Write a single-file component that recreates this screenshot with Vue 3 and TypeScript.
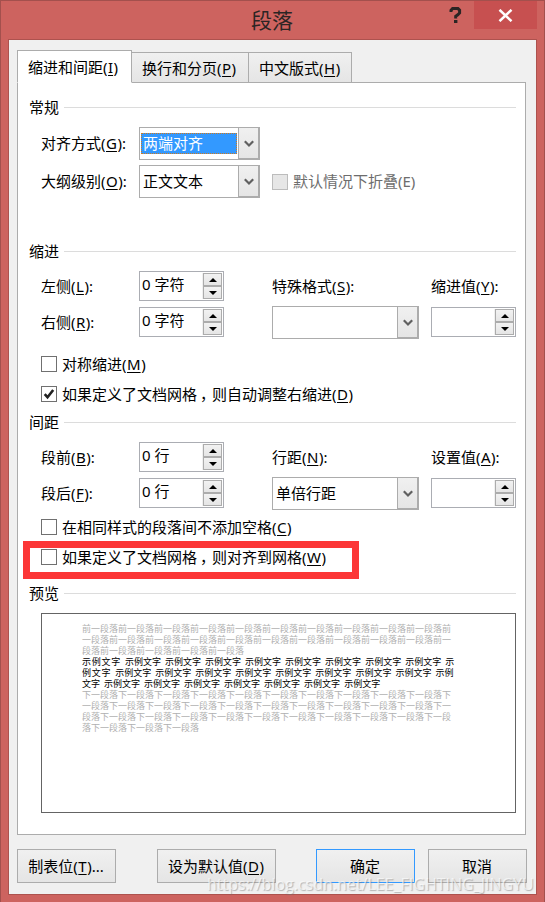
<script setup lang="ts">
import { h, ref, type FunctionalComponent } from 'vue'

// Renders a caption in which "&X" marks the underlined access key.
const Caption: FunctionalComponent<{ text: string }> = (props) =>
  h(
    'span',
    { class: 'caption' },
    props.text
      .split(/(&.|，)/)
      .filter(Boolean)
      .map((part) =>
        part[0] === '&' ? h('u', part[1]) : part === '，' ? h('span', { class: 'comma' }, part) : part,
      ),
  )
Caption.props = ['text']

const tabs = ['缩进和间距(&I)', '换行和分页(&P)', '中文版式(&H)']
const activeTab = ref(0)

const mirror = ref(false)
const autoIndent = ref(true)
const noSpace = ref(false)
const snapGrid = ref(false)

const prevText = '前一段落'.repeat(25)
const nextText = '下一段落'.repeat(34)
const slice = (s: string, n: number): string[] => s.match(new RegExp(`.{1,${n}}`, 'g')) ?? []
const prevLines = slice(prevText, 41)
const nextLines = slice(nextText, 41)
const sample = '示例文字'
const sampleLines = [
  { head: sample, rest: ` ${(sample + ' ').repeat(8)}示`, wide: true },
  { head: '例文字', rest: ` ${(sample + ' ').repeat(8)}示例`, wide: true },
  { head: '文字', rest: ` ${(sample + ' ').repeat(7)}`, wide: false },
]
</script>

<template>
  <div class="window" lang="zh-CN">
    <header class="titlebar">
      <h1 class="title">段落</h1>
      <svg class="help" width="13" height="17" viewBox="0 0 13 17">
        <path d="M2 5V3.4L3.6 1.6H9L10.6 3.2V6L8.8 7.8L6.7 9.2V11.6" fill="none" stroke="#2b2524" stroke-width="3" />
        <rect x="5" y="13" width="3.4" height="3" fill="#2b2524" />
      </svg>
      <button class="close">
        <svg width="15" height="13" viewBox="0 0 15 13">
          <path d="M1.5 .8L13.5 12.2M13.5 .8L1.5 12.2" fill="none" stroke="#fff" stroke-width="2.5" />
        </svg>
      </button>
    </header>

    <main class="client">
      <nav class="tabs">
        <div v-for="(t, i) in tabs" :key="t" class="tab" :class="{ active: i === activeTab }" @click="activeTab = i">
          <Caption :text="t" />
        </div>
      </nav>

      <section class="panel">
        <div class="group g1"><span>常规</span></div>
        <div class="row first">
          <Caption class="label" text="对齐方式(&G):" />
          <div class="combo narrow">
            <span class="value selected">两端对齐</span>
            <span class="drop"><svg width="10" height="8" viewBox="0 0 10 8"><path d="M.8 1.2L5 5.5L9.2 1.2" /></svg></span>
          </div>
        </div>
        <div class="row second">
          <Caption class="label" text="大纲级别(&O):" />
          <div class="combo narrow">
            <span class="value">正文文本</span>
            <span class="drop"><svg width="10" height="8" viewBox="0 0 10 8"><path d="M.8 1.2L5 5.5L9.2 1.2" /></svg></span>
          </div>
          <div class="check disabled"><i class="box"></i><Caption class="label" text="默认情况下折叠(E)" /></div>
        </div>

        <div class="group g2"><span>缩进</span></div>
        <div class="row first spins">
          <Caption text="左侧(&L):" />
          <div class="spin"><span class="num">0 字符</span><span class="arrows"><i></i><i></i></span></div>
          <Caption text="特殊格式(&S):" />
          <Caption text="缩进值(&Y):" />
        </div>
        <div class="row second">
          <Caption class="label" text="右侧(&R):" />
          <div class="spin"><span class="num">0 字符</span><span class="arrows"><i></i><i></i></span></div>
          <div class="combo">
            <span class="value"></span>
            <span class="drop"><svg width="10" height="8" viewBox="0 0 10 8"><path d="M.8 1.2L5 5.5L9.2 1.2" /></svg></span>
          </div>
          <div class="spin"><span class="num"></span><span class="arrows"><i></i><i></i></span></div>
        </div>
        <div class="check c1" @click="mirror = !mirror">
          <i class="box"><svg v-if="mirror" viewBox="0 0 14 14"><path d="M2.7 7.2L5.5 10.2L11.2 3" /></svg></i>
          <Caption text="对称缩进(&M)" />
        </div>
        <div class="check c2" @click="autoIndent = !autoIndent">
          <i class="box"><svg v-if="autoIndent" viewBox="0 0 14 14"><path d="M2.7 7.2L5.5 10.2L11.2 3" /></svg></i>
          <Caption text="如果定义了文档网格，则自动调整右缩进(&D)" />
        </div>

        <div class="group g3"><span>间距</span></div>
        <div class="row first spins">
          <Caption text="段前(&B):" />
          <div class="spin"><span class="num">0 行</span><span class="arrows"><i></i><i></i></span></div>
          <Caption text="行距(&N):" />
          <Caption text="设置值(&A):" />
        </div>
        <div class="row second">
          <Caption class="label" text="段后(&F):" />
          <div class="spin"><span class="num">0 行</span><span class="arrows"><i></i><i></i></span></div>
          <div class="combo">
            <span class="value">单倍行距</span>
            <span class="drop"><svg width="10" height="8" viewBox="0 0 10 8"><path d="M.8 1.2L5 5.5L9.2 1.2" /></svg></span>
          </div>
          <div class="spin"><span class="num"></span><span class="arrows"><i></i><i></i></span></div>
        </div>
        <div class="check c3" @click="noSpace = !noSpace">
          <i class="box"><svg v-if="noSpace" viewBox="0 0 14 14"><path d="M2.7 7.2L5.5 10.2L11.2 3" /></svg></i>
          <Caption text="在相同样式的段落间不添加空格(&C)" />
        </div>
        <div class="check c2 marked" @click="snapGrid = !snapGrid">
          <i class="box"><svg v-if="snapGrid" viewBox="0 0 14 14"><path d="M2.7 7.2L5.5 10.2L11.2 3" /></svg></i>
          <Caption text="如果定义了文档网格，则对齐到网格(&W)" />
        </div>

        <div class="group g4"><span>预览</span></div>
        <div class="preview">
          <p v-for="(l, i) in prevLines" :key="'p' + i" class="faint">{{ l }}</p>
          <p v-for="(l, i) in sampleLines" :key="'s' + i"><span :class="{ wide: l.wide }">{{ l.head }}</span>{{ l.rest }}</p>
          <p v-for="(l, i) in nextLines" :key="'n' + i" class="faint">{{ l }}</p>
        </div>
      </section>

      <footer class="actions">
        <button class="btn"><Caption text="制表位(&T)..." /></button>
        <button class="btn default-value"><Caption text="设为默认值(&D)" /></button>
        <button class="btn primary">确定</button>
        <button class="btn">取消</button>
      </footer>
    </main>
    <div class="watermark">https://blog.csdn.net/LEE_FIGHTING_JINGYU</div>
  </div>
</template>

<style>
body {
  margin: 0;
}
.caption {
  white-space: nowrap;
}
.caption .comma {
  display: inline-block;
  width: 15px;
  text-indent: 3px;
}
.caption u {
  padding: 0 0.5px;
  text-decoration-thickness: 1px;
  text-underline-offset: 2px;
}
</style>

<style scoped>
.window {
  position: relative;
  box-sizing: border-box;
  width: 545px;
  height: 902px;
  padding: 0 7px;
  border: 1px solid #a3504d;
  border-bottom: 0;
  background: #cd635f;
  font: 15px/20px 'Noto Sans', 'Noto Sans CJK SC', sans-serif;
  color: #000;
  overflow: hidden;
}
.titlebar {
  display: flex;
  height: 38px;
  align-items: flex-start;
}
.title {
  width: 42px;
  margin: 2px 0 0 243px;
  font: 400 21px/32px 'Noto Sans CJK SC', sans-serif;
  color: #2b2524;
  white-space: nowrap;
}
.help {
  margin: 6px 0 0 156px;
}
.close {
  display: flex;
  align-items: center;
  justify-content: center;
  width: 63px;
  height: 28px;
  margin-left: 12px;
  padding: 0 1px 0 0;
  border: 0;
  background: #c75050;
}
.client {
  box-sizing: border-box;
  width: 529px;
  height: 856px;
  padding: 10px 0 0 8px;
  border: 1px solid #ad524e;
  background: #f0f0f0;
}
.tabs {
  display: flex;
  align-items: flex-end;
  height: 33px;
}
.tab {
  box-sizing: border-box;
  display: flex;
  align-items: center;
  width: 118px;
  height: 31px;
  margin-left: -1px;
  padding-left: 10px;
  border: 1px solid #acacac;
  background: linear-gradient(#f0f0f0, #e5e5e5);
}
.tab:last-child {
  width: 104px;
}
.tab.active {
  position: relative;
  width: 115px;
  height: 33px;
  margin-left: 0;
  border-bottom-color: #fff;
  background: #fff;
}
.panel {
  box-sizing: border-box;
  width: 509px;
  height: 753px;
  margin-top: -1px;
  padding: 14px 9px 0 11px;
  border: 1px solid #acacac;
  background: #fff;
}
.group {
  display: flex;
  align-items: center;
  gap: 5px;
  height: 21px;
}
.group span,
.label {
  margin-bottom: 2px;
}
.group::after {
  content: '';
  flex: 1;
  height: 1px;
  background: #dcdcdc;
}
.g2 {
  margin-top: 43px;
}
.g3 {
  margin-top: 10px;
}
.g4 {
  margin-top: 18px;
}
.row {
  display: grid;
  grid-template-columns: 98px 133px 159px 85px;
  align-items: center;
  height: 33px;
  margin-left: 12px;
}
.first {
  margin-top: 9px;
}
.second {
  margin-top: 5px;
}
.spins {
  height: 30px;
}
.combo {
  box-sizing: border-box;
  display: flex;
  width: 147px;
  height: 33px;
  border: 1px solid #acacac;
  background: #fff;
}
.combo.narrow {
  width: 121px;
}
.value {
  flex: 1;
  margin: 5px 1px;
  padding-left: 2px;
  line-height: 20px;
}
.selected {
  box-sizing: border-box;
  height: 21px;
  padding-left: 1px;
  border: 1px dotted #d07a1e;
  background: #3399ff;
  color: #fff;
  line-height: 18px;
}
.drop {
  box-sizing: border-box;
  display: flex;
  align-items: center;
  justify-content: center;
  width: 21px;
  padding-top: 1px;
  border: 1px solid #acacac;
  border-top-width: 0;
  background: linear-gradient(#f0f0f0, #e5e5e5);
}
.drop svg {
  fill: none;
  stroke: #606060;
  stroke-width: 2.2;
}
.spin {
  box-sizing: border-box;
  display: flex;
  width: 85px;
  height: 30px;
  padding: 1px;
  border: 1px solid #abadb3;
  background: #fff;
}
.row.second .spin {
  margin-bottom: 1px;
}
.num {
  flex: 1;
  padding-left: 1px;
  line-height: 23px;
  white-space: nowrap;
}
.arrows {
  box-sizing: border-box;
  display: flex;
  flex-direction: column;
  width: 20px;
  padding-left: 1px;
  background: #f0f0f0;
}
.arrows i {
  box-sizing: border-box;
  display: flex;
  align-items: center;
  justify-content: center;
  height: 13px;
  border: 1px solid #acacac;
  background: linear-gradient(#f2f2f2, #e5e5e5);
}
.arrows i::after {
  content: '';
  border: 4px solid transparent;
  border-top: 0;
  border-bottom: 4px solid #000;
}
.arrows i + i::after {
  border-top: 4px solid #000;
  border-bottom: 0;
}
.check {
  display: flex;
  align-items: center;
  gap: 5px;
  height: 16px;
  margin-left: 12px;
}
.row .check {
  margin-left: 0;
}
.box {
  box-sizing: border-box;
  width: 16px;
  height: 16px;
  border: 1px solid #707070;
  background: #fff;
}
.box svg {
  display: block;
  fill: none;
  stroke: #212121;
  stroke-width: 2.6;
}
.disabled {
  color: #6d6d6d;
}
.disabled .box {
  border-color: #bcbcbc;
  background: #e6e6e6;
}
.c1 {
  margin-top: 17px;
}
.c2 {
  margin-top: 14px;
}
.c3 {
  margin-top: 9px;
}
.marked {
  position: relative;
}
.marked::after {
  content: '';
  position: absolute;
  box-sizing: border-box;
  left: -18px;
  top: -8px;
  width: 336px;
  height: 38px;
  border: 7px solid #fc3637;
}
.preview {
  box-sizing: border-box;
  width: 475px;
  height: 200px;
  margin: 9px 0 0 12px;
  padding: 9px 0 0 40px;
  border: 1px solid #646464;
  font: 9px/11px 'Noto Sans CJK SC', sans-serif;
  word-spacing: 2px;
}
.preview p {
  margin: 0;
  white-space: nowrap;
}
.faint {
  color: #b0b0b0;
}
.wide {
  letter-spacing: 0.75px;
}
.actions {
  display: flex;
  margin-top: 14px;
}
.btn {
  box-sizing: border-box;
  width: 99px;
  height: 34px;
  padding: 0 1px 0 0;
  border: 1px solid #acacac;
  background: linear-gradient(#f0f0f0, #e5e5e5);
  font: inherit;
  color: #000;
}
.default-value {
  width: 119px;
  margin-left: 41px;
}
.primary {
  margin: 0 13px 0 40px;
  border-color: #3399ff;
}
.watermark {
  position: absolute;
  left: 206px;
  top: 873px;
  font: 16px/20px 'Open Sans', sans-serif;
  color: rgba(255, 255, 255, 0.65);
  text-shadow: 1px 1px 1px rgba(120, 120, 120, 0.5);
  white-space: nowrap;
}
</style>
